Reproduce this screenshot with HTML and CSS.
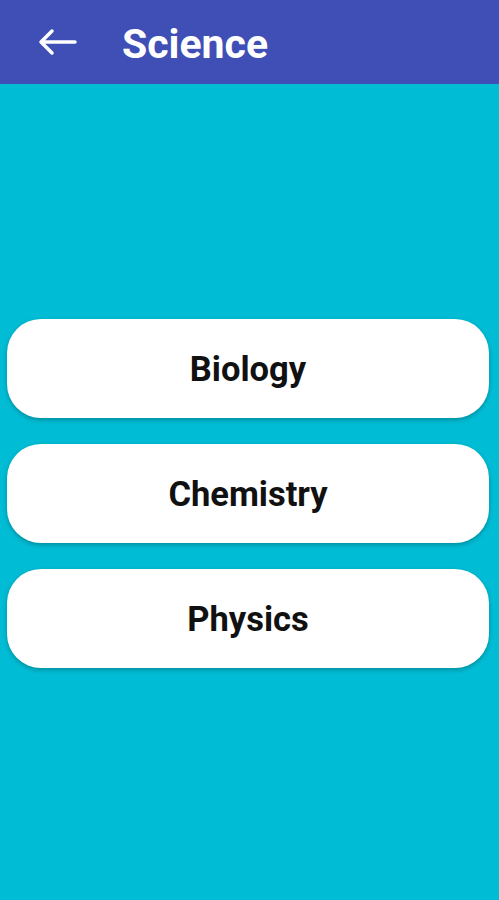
FILE: index.html
```html
<!DOCTYPE html>
<html>
<head>
<meta charset="utf-8">
<link rel="stylesheet" href="styles.css">
</head>
<body>
<div class="app">
  <header class="bar">
    <span class="back">
      <svg width="40" height="28" viewBox="0 0 40 28"><path d="M38 14H4M15 3L4 14L15 25" fill="none" stroke="#fff" stroke-width="3.5" stroke-linecap="round" stroke-linejoin="round"/></svg>
    </span>
    <h1 class="title">Science</h1>
  </header>
  <main class="list">
    <button class="item">Biology</button>
    <button class="item">Chemistry</button>
    <button class="item">Physics</button>
  </main>
</div>
</body>
</html>
```
FILE: styles.css
```css
html, body { margin: 0; padding: 0; }
body { background: #00bcd4; font-family: Roboto, "Liberation Sans", sans-serif; }
.app { width: 499px; height: 900px; display: flex; flex-direction: column; }
.bar { height: 84px; background: #3f4fb5; display: flex; align-items: center; padding-left: 37px; box-sizing: border-box; }
.back { display: flex; width: 40px; height: 28px; }
.title { margin: 0 0 0 45px; color: #fff; font-size: 41px; font-weight: 700; line-height: 1; margin-top: 4px; }
.list { display: flex; flex-direction: column; gap: 26px; padding: 235px 10px 0 7px; }
.item { height: 99px; border: none; border-radius: 34px; background: #fff; font-family: inherit; font-size: 34.5px; font-weight: 700; color: #111; box-shadow: 0 2px 4px rgba(0,0,0,0.25); padding: 0; }
```
